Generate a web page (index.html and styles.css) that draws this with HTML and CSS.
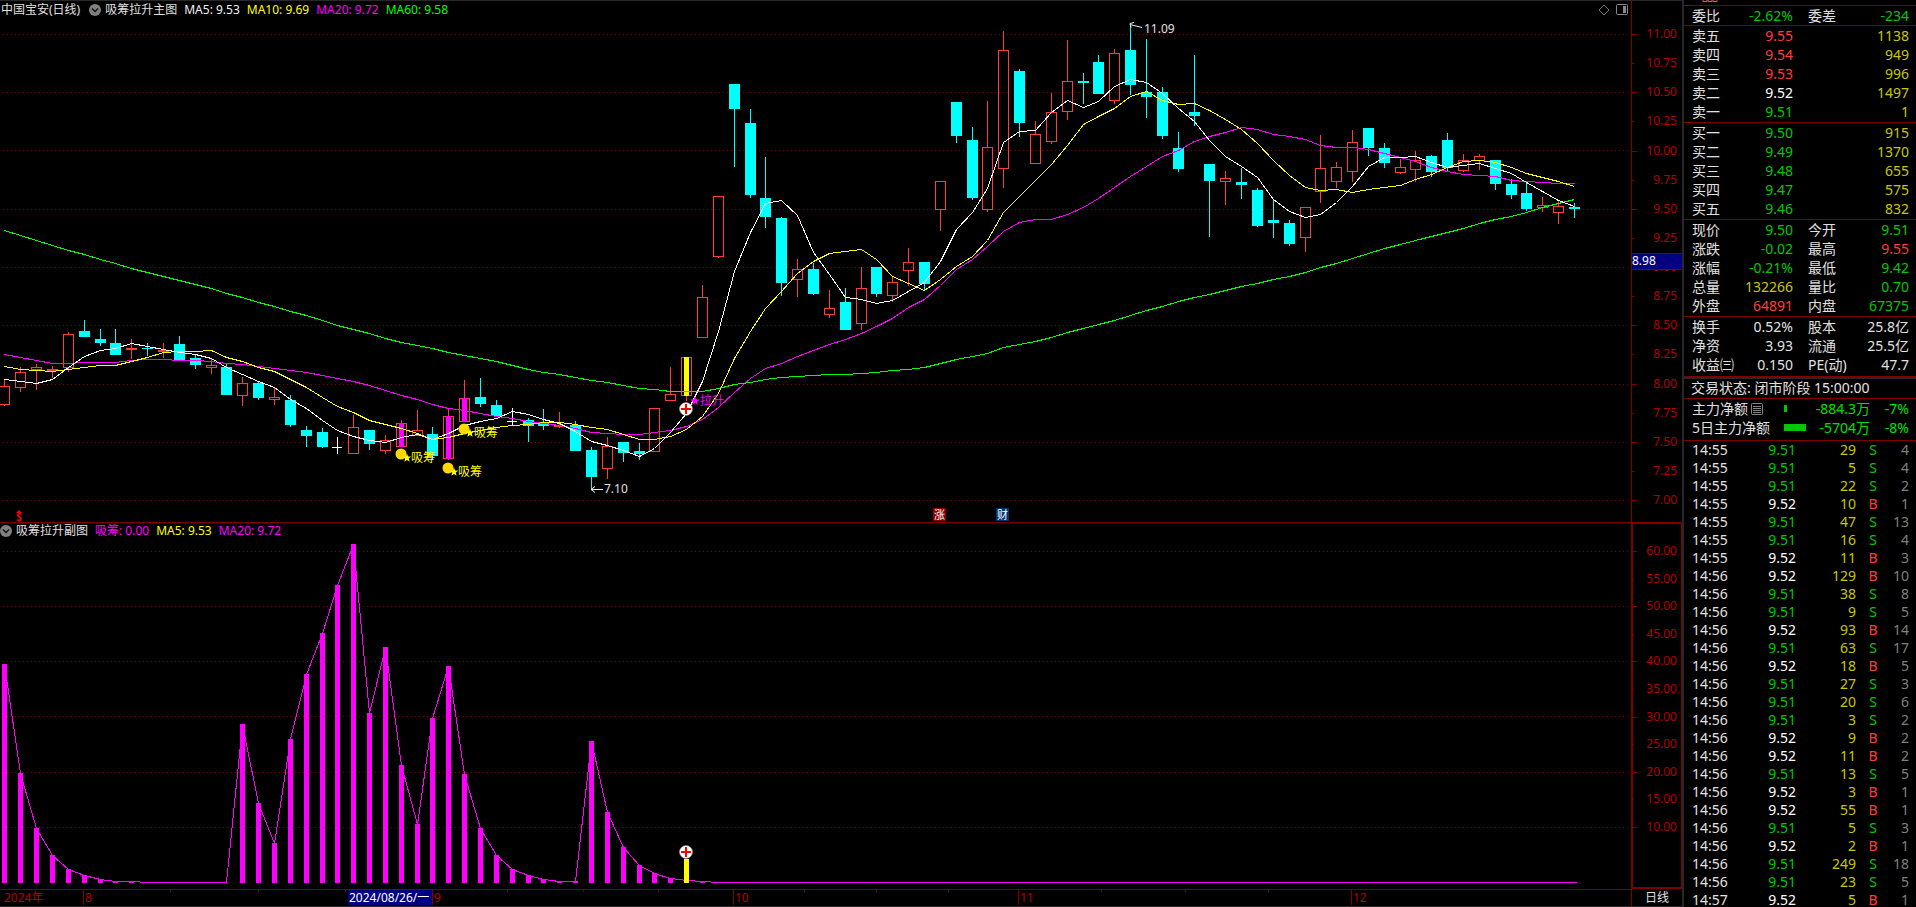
FILE: index.html
```html
<!DOCTYPE html>
<html lang="zh-CN">
<head>
<meta charset="utf-8">
<title>中国宝安 日线</title>
<link rel="stylesheet" href="styles.css">
</head>
<body>
<div class="terminal">
  <main class="charts">
    <section class="panel panel-main">
      <header class="panel-head">
        <h1 class="name">中国宝安(日线)</h1>
        <button class="drop" type="button" aria-label="主图指标菜单">
          <svg viewBox="0 0 12 12" width="12" height="12"><circle cx="6" cy="6" r="6" fill="#808080"/><path d="M3 4.5 6 7.5 9 4.5" fill="none" stroke="#111" stroke-width="1.4"/></svg>
        </button>
        <span class="name">吸筹拉升主图</span>
        <span class="ma white">MA5: 9.53</span>
        <span class="ma yellow">MA10: 9.69</span>
        <span class="ma magenta">MA20: 9.72</span>
        <span class="ma lime">MA60: 9.58</span>
        <span class="tools">
          <button class="drop" type="button" aria-label="标记"><svg viewBox="0 0 12 12" width="12" height="12"><path d="M6 1 11 6 6 11 1 6Z" fill="none" stroke="#777"/></svg></button>
          <button class="drop" type="button" aria-label="侧栏"><svg viewBox="0 0 12 12" width="12" height="12"><rect x=".5" y=".5" width="11" height="10" rx="1" fill="none" stroke="#888"/><rect x="7" y="2" width="3" height="7" fill="#888"/></svg></button>
        </span>
      </header>
      <svg class="plot" id="main-plot"></svg>
    </section>
    <div class="axis"><svg class="plot" id="main-axis"></svg></div>
    <section class="panel panel-sub">
      <header class="panel-head">
        <button class="drop" type="button" aria-label="副图指标菜单">
          <svg viewBox="0 0 12 12" width="12" height="12"><circle cx="6" cy="6" r="6" fill="#808080"/><path d="M3 4.5 6 7.5 9 4.5" fill="none" stroke="#111" stroke-width="1.4"/></svg>
        </button>
        <span class="name">吸筹拉升副图</span>
        <span class="ma magenta">吸筹: 0.00</span>
        <span class="ma yellow">MA5: 9.53</span>
        <span class="ma magenta">MA20: 9.72</span>
      </header>
      <svg class="plot" id="sub-plot"></svg>
    </section>
    <div class="axis axis-sub"><svg class="plot" id="sub-axis"></svg></div>
    <div class="time"><svg class="plot" id="time-axis"></svg></div>
    <div class="period">日线</div>
  </main>

  <aside class="quote">
    <div class="quote-top"><svg viewBox="0 0 16 3" width="16" height="3"><path d="M1 0v1.500h4V0M6 0v1.500h4V0M11 0v1.500h4V0" fill="none" stroke="#ff5050"/></svg></div>
    <table class="block tight">
      <colgroup><col class="c1"><col class="c2"><col class="c3"><col class="c4"></colgroup>
      <tr><th>委比</th><td class="g">-2.62%</td><th>委差</th><td class="g">-234</td></tr>
    </table>
    <table class="block">
      <colgroup><col class="c1"><col class="c2"><col class="c3"><col class="c4"></colgroup>
      <tr><th>卖五</th><td class="r">9.55</td><td></td><td class="y">1138</td></tr>
      <tr><th>卖四</th><td class="r">9.54</td><td></td><td class="y">949</td></tr>
      <tr><th>卖三</th><td class="r">9.53</td><td></td><td class="y">996</td></tr>
      <tr><th>卖二</th><td class="w">9.52</td><td></td><td class="y">1497</td></tr>
      <tr><th>卖一</th><td class="g">9.51</td><td></td><td class="y">1</td></tr>
    </table>
    <table class="block">
      <colgroup><col class="c1"><col class="c2"><col class="c3"><col class="c4"></colgroup>
      <tr><th>买一</th><td class="g">9.50</td><td></td><td class="y">915</td></tr>
      <tr><th>买二</th><td class="g">9.49</td><td></td><td class="y">1370</td></tr>
      <tr><th>买三</th><td class="g">9.48</td><td></td><td class="y">655</td></tr>
      <tr><th>买四</th><td class="g">9.47</td><td></td><td class="y">575</td></tr>
      <tr><th>买五</th><td class="g">9.46</td><td></td><td class="y">832</td></tr>
    </table>
    <table class="block">
      <colgroup><col class="c1"><col class="c2"><col class="c3"><col class="c4"></colgroup>
      <tr><th>现价</th><td class="g">9.50</td><th>今开</th><td class="g">9.51</td></tr>
      <tr><th>涨跌</th><td class="g">-0.02</td><th>最高</th><td class="r">9.55</td></tr>
      <tr><th>涨幅</th><td class="g">-0.21%</td><th>最低</th><td class="g">9.42</td></tr>
      <tr><th>总量</th><td class="y">132266</td><th>量比</th><td class="g">0.70</td></tr>
      <tr><th>外盘</th><td class="r">64891</td><th>内盘</th><td class="g">67375</td></tr>
    </table>
    <table class="block last">
      <colgroup><col class="c1"><col class="c2"><col class="c3"><col class="c4"></colgroup>
      <tr><th>换手</th><td>0.52%</td><th>股本</th><td>25.8亿</td></tr>
      <tr><th>净资</th><td>3.93</td><th>流通</th><td>25.5亿</td></tr>
      <tr><th>收益㈢</th><td>0.150</td><th>PE(动)</th><td>47.7</td></tr>
    </table>
    <p class="status">交易状态: 闭市阶段 15:00:00</p>
    <table class="block flow">
      <colgroup><col class="f1"><col class="f2"><col class="f3"><col class="f4"></colgroup>
      <tr><th><span class="with-icon">主力净额<svg viewBox="0 0 12 12" width="12" height="12"><rect x=".5" y=".5" width="11" height="11" rx="1" fill="none" stroke="#888"/><path d="M2 3.500h8M2 5.500h8M2 7.500h8M2 9.500h8" stroke="#888"/></svg></span></th><td><span class="bar bar-s"></span></td><td>-884.3万</td><td>-7%</td></tr>
      <tr><th>5日主力净额</th><td><span class="bar bar-l"></span></td><td>-5704万</td><td>-8%</td></tr>
    </table>
    <table class="trades">
      <colgroup><col class="t1"><col class="t2"><col class="t3"><col class="t4"><col class="t5"></colgroup>
      <tbody id="trades"></tbody>
    </table>
  </aside>
</div>
<script src="app.js"></script>
</body>
</html>
```

FILE: styles.css
```css
* { box-sizing: border-box; }
body {
  margin: 0;
  background: #000;
  color: #e0e0e0;
  font: 12px/18px "Noto Sans", "Noto Sans CJK SC", sans-serif;
}
.terminal {
  display: grid;
  grid-template-columns: minmax(0, 1fr) 234px;
  height: 100vh;
  overflow: hidden;
}
.charts {
  display: grid;
  grid-template-columns: minmax(0, 1fr) 51px;
  grid-template-rows: minmax(0, 522fr) minmax(0, 367fr) 18px;
  min-width: 0;
}
.panel { display: flex; flex-direction: column; min-height: 0; }
.panel-main { border-top: 1px solid #282828; }
.panel-sub { border-top: 1px solid #800000; }
.panel-head {
  display: flex;
  align-items: center;
  gap: 7px;
  flex: none;
  height: 17px;
  line-height: 16px;
  padding-bottom: 1px;
  white-space: nowrap;
}
.panel-main .panel-head { height: 19px; padding: 0 3px 2px 1px; }
.panel-head .drop + .name { margin-left: -3px; }
.name { margin: 0; font-size: 12px; font-weight: 400; }
h1.name { margin-right: 2px; }
.white { color: #f0f0f0; }
.yellow { color: #ff0; }
.magenta { color: #f0f; }
.lime { color: #0f0; }
.drop { display: block; width: 12px; height: 12px; padding: 0; border: 0; background: none; }
.drop svg { display: block; }
.tools { display: flex; gap: 6px; margin-left: auto; }
.plot { display: block; flex: 1; width: 100%; height: 100%; min-height: 0; overflow: visible; }
.plot text { font-size: 12px; }
.axis { min-height: 0; border-left: 1px solid #800000; border-top: 1px solid #282828; }
.axis-sub { border: 2px solid #800000; border-right-width: 1px; }
.time { border-top: 1px solid #800000; border-bottom: 1px solid #282828; }
.period {
  border-left: 1px solid #800000;
  border-bottom: 1px solid #282828;
  text-align: center;
  line-height: 17px;
}

.quote {
  border-left: 2px solid #282828;
  overflow: hidden;
  font-size: 14px;
  line-height: 19px;
}
.quote-top { height: 5px; padding-left: 18px; }
.quote-top svg { display: block; }
.quote table { width: 100%; table-layout: fixed; border-collapse: collapse; }
.quote th, .quote td {
  height: 19px;
  padding: 0;
  font-weight: 400;
  text-align: right;
  white-space: nowrap;
}
.quote th { text-align: left; }
.block { display: block; padding: 0 7px 1px 8px; border-top: 1px solid #800000; }
.tight { padding-bottom: 1px; line-height: 17px; }
.quote .tight th, .quote .tight td { height: 18px; }
.last { padding-bottom: 2px; }
.c1 { width: 45px; }
.c2 { width: 56px; }
.c3 { width: 60px; }
.c4 { width: 56px; }
.block td + th { padding-left: 15px; }
.g { color: #00c800; }
.r { color: #ff3c3c; }
.y { color: #c8c800; }
.w { color: #fff; }
.n { color: #808080; }
.status {
  height: 22px;
  margin: 0;
  padding-left: 7px;
  border-top: 1px solid #800000;
  box-shadow: inset 0 2px #282828;
  line-height: 22px;
}
.flow { padding-bottom: 3px; }
.flow td { color: #00e000; }
.f1 { width: 92px; }
.f2 { width: 24px; }
.f3 { width: 62px; }
.f4 { width: 39px; }
.with-icon { display: flex; align-items: center; gap: 3px; }
.bar { display: block; height: 7px; background: #00c800; }
.bar-s { width: 3px; }
.bar-l { width: 22px; }
.trades { display: block; padding: 0 7px 0 8px; border-top: 1px solid #800000; line-height: 18px; }
.quote .trades td { height: 18px; }
.quote .trades td:first-child { text-align: left; }
.quote .trades td:nth-child(4) { text-align: center; }
.t1 { width: 60px; }
.t2 { width: 44px; }
.t3 { width: 60px; }
.t4 { width: 34px; }
.t5 { width: 19px; }
```

FILE: app.js
```js
// Chart geometry is kept in layout units (1631 x 907) and scaled to each panel.
const UNIT_W = 1631;
const STEP = 15.855;
const NS = 'http://www.w3.org/2000/svg';

// Candle: kind (r rise, c fall, w flat, m/k rise with signal bar), open/close band, high, low
const candles = `r386,405,379,406 r372,388,367,392 r367,370,364,390 r369,371,366,378 r334,368,332,372
c331,337,320,337 c339,343,329,346 c343,355,329,355 r348,350,339,359 c348,349,343,356
r350,352,343,358 c344,360,336,360 c358,365,354,369 r365,368,359,374 c367,395,364,395
r383,396,377,406 c383,398,382,400 r397,400,388,405 c400,425,395,427 c430,436,426,447
c432,447,428,448 w447,448,437,454 r427,454,415,454 c430,444,430,450 r440,451,435,454
m423,447,420,447 r430,436,410,436 c434,456,427,460 m416,459,408,460 m398,422,380,422
c397,404,378,407 c405,416,400,417 w421,422,408,425 c420,426,418,442 c423,426,409,430
r425,427,412,428 c425,451,421,451 c450,477,447,489 r446,469,437,479 c442,453,442,462
c451,454,443,460 r408,452,408,452 r394,401,367,401 k357,396,357,401 r297,338,285,338
r196,257,196,258 c84,109,84,167 c123,195,109,198 c198,217,157,228 c218,283,217,296
r269,280,259,297 c269,294,263,295 r308,315,290,318 c302,330,288,330 r288,324,267,330
c267,294,267,297 r282,296,277,302 r262,271,248,286 c262,284,262,290 r181,210,181,231
c102,136,102,143 c140,198,127,200 r147,210,101,212 r50,169,31,188 c71,123,69,137
r134,164,121,164 r112,142,93,144 r81,112,40,120 c81,83,73,104 c62,94,55,94
r53,101,49,104 c50,85,25,95 c92,97,39,118 c92,136,87,139 c148,169,132,172
c112,116,55,126 c164,181,164,237 r178,182,171,205 c182,185,168,199 c190,226,188,227
c220,223,199,238 c223,244,220,246 r207,238,207,252 r168,192,135,203 r167,182,162,188
r142,172,130,182 c128,148,128,156 c148,163,143,168 r167,173,159,174 r160,170,151,182
c156,172,155,177 c140,168,133,171 r160,171,154,172 r156,161,154,170 c160,184,160,190
c184,195,179,199 c193,209,182,211 r205,208,197,212 r206,213,200,224 c207,209,203,218`
  .split(/\s+/).map(s => [s[0], ...s.slice(1).split(',').map(Number)]);

const averages = [
  ['#f0f', [354,357,360,363,363,362,362,362,360,359,359,360,360,361,363,364,366,368,370,372,375,378,381,385,390,395,399,404,408,410,413,416,418,421,423,425,428,432,433,434,434,432,430,426,419,407,392,378,368,363,356,350,344,339,333,326,318,307,299,285,269,259,246,231,222,219,219,214,207,198,187,176,166,156,150,141,136,132,127,129,134,136,139,145,147,147,149,153,157,161,167,171,174,175,176,180,181,182,183,183]],
  ['#0f0', [230,235,240,245,250,254,259,263,268,272,276,280,284,288,293,297,302,306,311,315,320,325,329,333,338,342,345,348,352,355,358,361,365,369,372,374,377,380,382,385,388,389,391,391,391,388,384,382,379,377,376,375,374,374,373,372,370,369,367,363,359,356,353,347,344,341,337,332,328,324,320,315,310,306,301,297,294,290,286,283,279,276,272,267,263,258,253,248,244,240,236,232,228,223,219,216,212,207,203,199]],
  ['#ff0', [366,369,370,371,369,367,365,365,361,357,352,351,351,350,357,361,367,371,379,387,397,406,412,420,424,428,433,439,437,433,430,427,425,424,422,422,424,427,429,434,439,439,436,429,416,393,358,331,308,291,273,261,253,251,249,259,276,283,290,279,266,256,240,212,196,180,164,145,124,116,108,96,91,100,104,103,110,119,129,143,160,175,187,190,189,192,189,187,185,179,174,167,161,160,162,167,173,177,181,186]],
  ['#fff', [379,381,383,379,367,356,350,348,343,346,349,352,354,358,367,374,381,387,399,408,420,430,436,440,442,437,434,439,433,425,421,418,411,414,419,423,431,441,445,450,456,448,432,413,381,331,271,232,203,200,215,252,274,297,299,303,300,291,282,261,229,212,188,142,131,130,112,100,107,101,86,79,82,93,108,121,140,156,166,177,199,211,217,214,202,186,166,157,157,156,162,167,165,163,168,173,182,191,200,206]]
];

const BASE = 883;
const signal = [664,773,828,855,869,875,879,881,881,882,882,882,882,882,882,724,803,843,739,674,633,585,544,713,647,765,824,718,666,774,828,855,869,875,879,881,881,741,812,847,865,873,878,880,881];

const trades = `14:55 29 S 4|14:55 5 S 4|14:55 22 S 2|14:55 10 B 1|14:55 47 S 13|14:55 16 S 4|14:55 11 B 3|14:56 129 B 10|14:56 38 S 8|14:56 9 S 5|14:56 93 B 14|14:56 63 S 17|14:56 18 B 5|14:56 27 S 3|14:56 20 S 6|14:56 3 S 2|14:56 9 B 2|14:56 11 B 2|14:56 13 S 5|14:56 3 B 1|14:56 55 B 1|14:56 5 S 3|14:56 2 B 1|14:56 249 S 18|14:56 23 S 5|14:57 5 B 1`;

function surface(id, top, height, unitW) {
  const svg = document.getElementById(id);
  svg.replaceChildren();
  const box = svg.getBoundingClientRect();
  const sx = box.width / unitW;
  const sy = box.height / height;
  const add = (tag, attrs, text) => {
    const el = document.createElementNS(NS, tag);
    for (const key in attrs) el.setAttribute(key, attrs[key]);
    if (text) el.textContent = text;
    svg.appendChild(el);
    return el;
  };
  return {
    width: box.width,
    X: v => Math.round(v * sx),
    bar: i => Math.floor((4.9 + i * STEP) * sx),
    Y: v => Math.round((v - top) * sy),
    add,
    rect: (x, y, w, h, fill) => add('rect', { x, y, width: w, height: Math.max(h, 1), fill, 'shape-rendering': 'crispEdges' }),
    line: (x1, y1, x2, y2, stroke, extra) => add('line', { x1, y1, x2, y2, stroke, 'shape-rendering': 'crispEdges', ...extra }),
    text: (x, y, str, fill, extra) => add('text', { x, y: y + 4, fill, ...extra }, str)
  };
}

function grid(s, levels) {
  for (const v of levels) {
    const y = s.Y(v) + 0.5;
    s.line(3, y, s.width - 2, y, '#800000', { 'stroke-dasharray': '1 3' });
  }
}

function poly(s, values, stroke) {
  const points = values.map((v, i) => `${s.bar(i) + 0.5},${s.Y(v) + 0.5}`).join(' ');
  s.add('polyline', { points, fill: 'none', stroke, 'shape-rendering': 'crispEdges' });
}

function star(s, cx, cy, r, fill) {
  const pts = [];
  for (let k = 0; k < 10; k++) {
    const a = -Math.PI / 2 + k * Math.PI / 5;
    const d = k % 2 ? r * 0.42 : r;
    pts.push(`${(cx + d * Math.cos(a)).toFixed(2)},${(cy + d * Math.sin(a)).toFixed(2)}`);
  }
  s.add('polygon', { points: pts.join(' '), fill });
}

function plus(s, cx, cy) {
  s.add('circle', { cx, cy, r: 6.5, fill: '#fff', stroke: '#999', 'stroke-width': 0.5 });
  s.add('path', { d: `M${cx - 5} ${cy}h10M${cx} ${cy - 5}v10`, stroke: '#f00', 'stroke-width': 2 });
}

function drawMain() {
  const s = surface('main-plot', 20, 502, UNIT_W);
  grid(s, [34, 92, 150, 209, 267, 325, 384, 442, 500]);
  candles.forEach(([kind, t, b, h, l], i) => {
    const x = s.bar(i);
    const T = s.Y(t), B = s.Y(b), H = s.Y(h), L = s.Y(l);
    if (kind === 'c' || kind === 'w') {
      const fill = kind === 'c' ? '#0ff' : '#fff';
      s.rect(x, H, 1, L - H, fill);
      s.rect(x - 5, T, kind === 'c' ? 11 : 10, B - T, fill);
      return;
    }
    const red = '#ff3c3c';
    if (T > H) s.rect(x, H, 1, T - H, red);
    if (L > B) s.rect(x, B, 1, L - B, red);
    s.add('rect', { x: x - 4.5, y: T + 0.5, width: 10, height: Math.max(B - T - 1, 1), fill: 'none', stroke: red, 'shape-rendering': 'crispEdges' });
    if (kind === 'm') s.rect(x - 2, T, 5, B - T, '#f0f');
    if (kind === 'k') s.rect(x - 2, T, 5, B - T, '#ff0');
  });
  averages.forEach(([color, values]) => poly(s, values, color));

  [[25, 454], [28, 468], [29, 429]].forEach(([i, v]) => {
    const x = s.bar(i), y = s.Y(v);
    s.add('circle', { cx: x, cy: y, r: 5.5, fill: '#ffd800' });
    star(s, x + 6, y + 4, 4.5, '#ff0');
    s.text(x + 10, y + 4, '吸筹', '#ff0');
  });

  const bx = s.bar(43);
  star(s, bx + 9, s.Y(401), 5, '#f0f');
  s.text(bx + 14, s.Y(401), '拉升', '#f0f');
  plus(s, bx, s.Y(409));

  const lx = s.bar(37), ly = s.Y(489) + 0.5;
  s.add('path', { d: `M${lx} ${ly}h12M${lx + 4} ${ly - 3}l-4 3 4 3`, fill: 'none', stroke: '#eee' });
  s.text(lx + 13, s.Y(489), '7.10', '#e0e0e0');
  const hx = s.bar(71), hy = s.Y(24) + 0.5;
  s.add('path', { d: `M${hx} ${hy}l12 3M${hx + 4} ${hy - 2}l-4 1 1 4`, fill: 'none', stroke: '#eee' });
  s.text(hx + 14, s.Y(29), '11.09', '#e0e0e0');

  s.add('path', { d: `M${s.X(16)} ${s.Y(513)}l3-3 3 3z`, fill: '#f00' });
  s.add('text', { x: s.X(19), y: s.Y(521), fill: '#f00', 'text-anchor': 'middle', style: 'font-size:10px;font-weight:700' }, 'S');
  [[933, '涨', '#8b0000'], [996, '财', '#003370']].forEach(([x, ch, bg]) => {
    s.rect(s.X(x), s.Y(508), 13, 13, bg);
    s.text(s.X(x) + 1, s.Y(515), ch, '#fff', { style: 'font-size:11px' });
  });
}

function drawMainAxis() {
  const s = surface('main-axis', 1, 521, 50);
  for (let p = 0; p <= 16; p++) {
    const y = s.Y(34 + p * 29.13);
    s.line(0, y + 0.5, p % 2 ? 2 : 5, y + 0.5, '#800000');
    s.text(45, y, (11 - p * 0.25).toFixed(2), '#b40000', { 'text-anchor': 'end' });
  }
  const t = s.Y(253);
  s.rect(0, t, 50, 17, '#800000');
  s.rect(0, t + 1, 50, 15, '#000080');
  s.text(0, t + 8, '8.98', '#fff');
}

function drawSub() {
  const s = surface('sub-plot', 540, 349, UNIT_W);
  grid(s, [551, 606, 661, 716, 772, 827]);
  const base = s.Y(BASE);
  signal.forEach((v, i) => {
    if (v < 882 && i !== 43) s.rect(s.bar(i) - 2, s.Y(v), 5, base - s.Y(v), '#f0f');
  });
  poly(s, candles.map((c, i) => signal[i] || 882), '#f0f');
  s.rect(s.bar(99), base - 1, 3, 1, '#f0f');
  const x = s.bar(43);
  s.rect(x - 2, s.Y(859), 5, base - s.Y(859), '#ff0');
  plus(s, x, s.Y(852));
}

function drawSubAxis() {
  const s = surface('sub-axis', 524, 363, 48);
  for (let k = 0; k <= 10; k++) {
    const y = s.Y(551 + k * 27.6);
    s.line(0, y + 0.5, k % 2 ? 1 : 4, y + 0.5, '#800000');
    s.text(44, y, (60 - k * 5).toFixed(2), '#b40000', { 'text-anchor': 'end' });
  }
}

function drawTime() {
  const s = surface('time-axis', 890, 16, UNIT_W);
  [170, 258, 345, 507, 583, 658, 804, 876, 948, 1101, 1185, 1268].forEach(v => s.rect(s.X(v), 0, 1, 2, '#800000'));
  s.text(s.X(4), 8, '2024年', '#b40000');
  [[83, '8'], [432, '9'], [733, '10'], [1018, '11'], [1351, '12']].forEach(([v, label]) => {
    s.rect(s.X(v), 0, 1, 15, '#800000');
    s.text(s.X(v) + 2, 8, label, '#b40000');
  });
  s.rect(s.X(348), 0, 84, 15, '#000080');
  s.text(s.X(348) + 1, 8, '2024/08/26/一', '#fff');
}

function fillTrades() {
  document.getElementById('trades').innerHTML = trades.split('|').map(row => {
    const [time, volume, side, count] = row.split(' ');
    const sell = side === 'S';
    return `<tr><td>${time}</td><td class="${sell ? 'g' : 'w'}">${sell ? '9.51' : '9.52'}</td><td class="y">${volume}</td><td class="${sell ? 'g' : 'r'}">${side}</td><td class="n">${count}</td></tr>`;
  }).join('');
}

function draw() {
  drawMain();
  drawMainAxis();
  drawSub();
  drawSubAxis();
  drawTime();
}

fillTrades();
draw();
window.addEventListener('resize', draw);
```
